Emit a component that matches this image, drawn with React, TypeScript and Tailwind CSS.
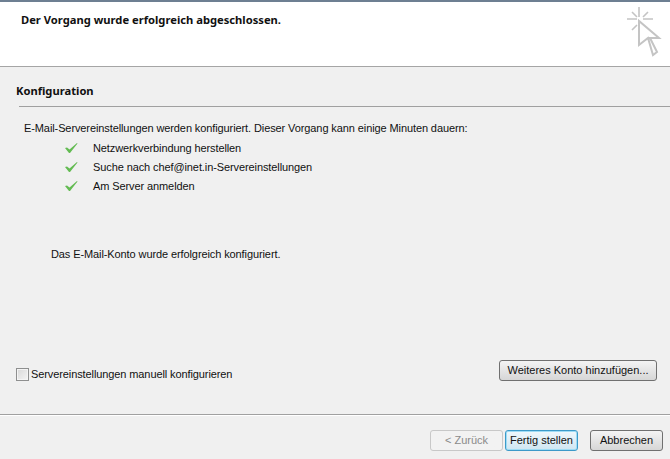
const font = "font-['Liberation_Sans','DejaVu_Sans',sans-serif]";
const boldFont = "font-['Noto_Sans','DejaVu_Sans',sans-serif]";

function Check() {
  return (
    <svg width="14" height="12" viewBox="0 0 14 12" className="shrink-0">
      <path d="M1 6 L3 5.5 L5.5 7.5 L13 1 L13.5 1.5 L6 11 L5 11 Z" fill="#63bb52" />
    </svg>
  );
}

function CursorIcon() {
  return (
    <svg width="36" height="52" viewBox="0 0 36 52" fill="none" stroke="#c4c4c4" strokeWidth="1.6">
      <path d="M12 1 V11 M0 13 H10 M16 13 H26 M5 6 L10 11 M21 6 L16 11 M5 24 L10 19" />
      <path d="M12 15 L12 39 L21 32 L26 49 L30 46 L23 32 L32 32 Z" fill="#ffffff" strokeWidth="2" />
    </svg>
  );
}

function Button({ label, className }: { label: string; className: string }) {
  return (
    <button className={`flex h-[21px] items-center justify-center rounded-[3px] border bg-gradient-to-b text-[11px] ${className}`}>
      {label}
    </button>
  );
}

const steps = ['Netzwerkverbindung herstellen', 'Suche nach chef@inet.in-Servereinstellungen', 'Am Server anmelden'];

export default function App() {
  return (
    <div className={`flex h-[459px] w-[670px] flex-col overflow-hidden bg-[#f0f0f0] text-[#111] ${font}`}>
      {/* Kopfbereich */}
      <header className="flex h-[67px] shrink-0 justify-between border-t-2 border-b border-t-[#6d7f92] border-b-[#a5a5a5] bg-white pr-[7px] pl-[21px]">
        <h1 className={`pt-[10px] text-[11.2px] leading-[16px] font-bold ${boldFont}`}>Der Vorgang wurde erfolgreich abgeschlossen.</h1>
        <div className="pt-[4px]">
          <CursorIcon />
        </div>
      </header>

      <main className="flex flex-1 flex-col">
        <section className="pt-[16px] pl-[16px]">
          <h2 className={`text-[11.2px] leading-[16px] font-bold ${boldFont}`}>Konfiguration</h2>
          <div className="mt-[7px] ml-[3px] h-px bg-[#a0a0a0]" />
        </section>

        <p className="mt-[13px] pl-[24px] text-[11px] leading-[16px] tracking-[-0.1px]">
          E-Mail-Servereinstellungen werden konfiguriert. Dieser Vorgang kann einige Minuten dauern:
        </p>

        <ul className="mt-[4px] flex flex-col gap-[3px] pl-[64px]">
          {steps.map((s) => (
            <li key={s} className="flex h-[16px] items-center gap-[15px] text-[11px] leading-[16px] tracking-[-0.1px]">
              <Check />
              <span>{s}</span>
            </li>
          ))}
        </ul>

        <p className="mt-[52px] pl-[51px] text-[11px] leading-[16px] tracking-[-0.1px]">Das E-Mail-Konto wurde erfolgreich konfiguriert.</p>

        <div className="mt-[98px] flex items-start justify-between pr-[13px] pl-[16px]">
          <label className="mt-[6px] flex items-center gap-[2px] text-[11px] leading-[16px] tracking-[-0.1px]">
            <span className="h-[13px] w-[13px] border border-[#8e8f8f] bg-gradient-to-br from-[#d8d8d8] to-[#f4f4f4] shadow-[inset_0_0_0_1px_#f4f4f4]" />
            Servereinstellungen manuell konfigurieren
          </label>
          <Button label="Weiteres Konto hinzufügen..." className="w-[158px] border-[#707070] from-[#f4f4f4] to-[#d6d6d6]" />
        </div>
      </main>

      <footer className="flex h-[45px] shrink-0 items-start justify-end border-t border-t-[#a0a0a0] pt-[15px] pr-[7px] shadow-[inset_0_1px_0_#ffffff]">
        <Button label="< Zurück" className="w-[73px] border-[#c8c8c8] from-[#f2f2f2] to-[#f2f2f2] text-[#8a8a8a]" />
        <Button label="Fertig stellen" className="ml-[2px] w-[73px] border-[#3c9ac9] from-[#f0f8fc] to-[#cfe6f2] shadow-[inset_0_0_0_1px_#9fdcf5]" />
        <Button label="Abbrechen" className="ml-[12px] w-[73px] border-[#707070] from-[#f4f4f4] to-[#d6d6d6]" />
      </footer>
    </div>
  );
}
